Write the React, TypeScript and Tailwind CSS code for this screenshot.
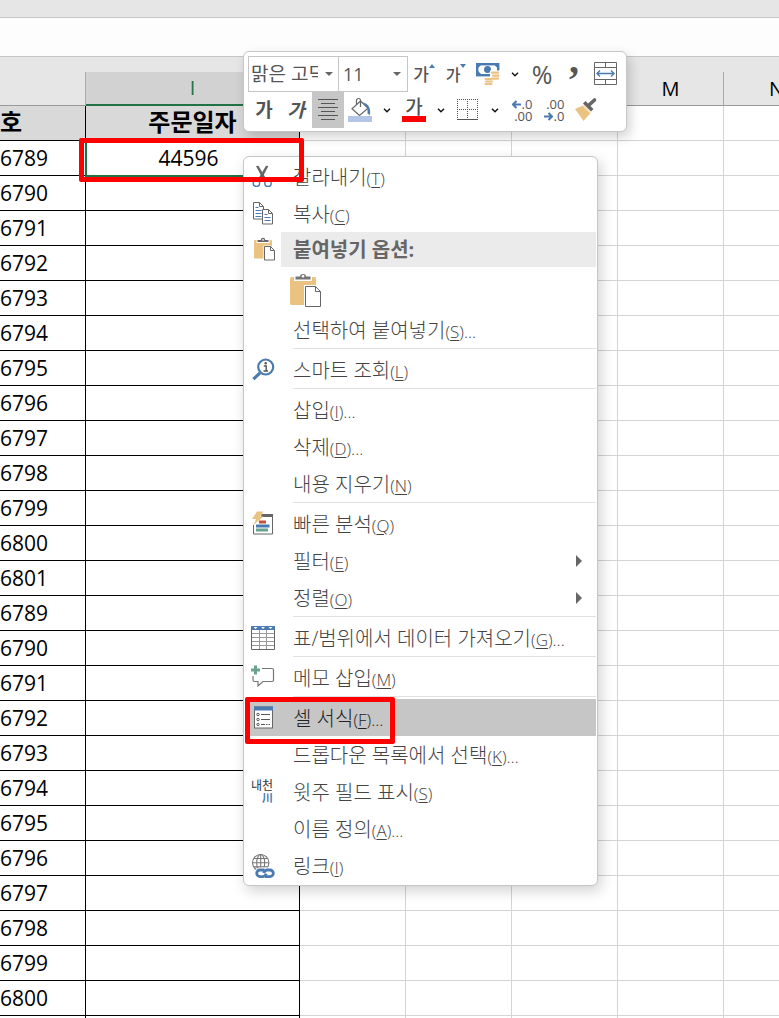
import type { ReactNode } from "react";

const orderNumbers = [
  "6789",
  "6790",
  "6791",
  "6792",
  "6793",
  "6794",
  "6795",
  "6796",
  "6797",
  "6798",
  "6799",
  "6800",
  "6801",
  "6789",
  "6790",
  "6791",
  "6792",
  "6793",
  "6794",
  "6795",
  "6796",
  "6797",
  "6798",
  "6799",
  "6800",
  "",
];

const plainColumns = ["J", "K", "L", "M", "N"];

function Svg({ children }: { children: ReactNode }) {
  return (
    <svg
      width="24"
      height="24"
      viewBox="0 0 24 24"
      fill="none"
      aria-hidden="true"
      className="shrink-0 overflow-visible"
    >
      {children}
    </svg>
  );
}

/* ---------- menu icons ---------- */

function CutIcon() {
  return (
    <Svg>
      <path d="M5 1 7.400.8 15 13.600 12.600 15.600Z" fill="#666" />
      <path d="M17.400 1 15 .8 7.400 13.600 9.800 15.600Z" fill="#666" />
      <circle cx="5.400" cy="18.200" r="3.200" stroke="#4a7ab0" strokeWidth="1.400" />
      <circle cx="17" cy="18.200" r="3.200" stroke="#4a7ab0" strokeWidth="1.400" />
    </Svg>
  );
}

function CopyIcon() {
  return (
    <Svg>
      <path d="M2.500.5h6l4 4v12.500h-10Z" fill="#fff" stroke="#666" />
      <path d="M8.500.5v4h4" stroke="#666" />
      <path d="M4.500 5.500h3M4.500 8.500h6M4.500 11.500h6M4.500 14.500h6" stroke="#4a7ab0" />
      <path d="M11.500 7.500h6l4 4v10.500h-10Z" fill="#fff" stroke="#666" />
      <path d="M17.500 7.500v4h4" stroke="#666" />
      <path d="M13.500 12.500h3M13.500 15.500h6M13.500 18.500h6" stroke="#4a7ab0" />
    </Svg>
  );
}

function PasteIcon() {
  return (
    <Svg>
      <rect x="3" y="2" width="18" height="18.500" rx="1" fill="#eac282" />
      <path d="M5.500 5V1.500h4a2.600 2.600 0 0 1 5 0h4V5Z" fill="#fff" />
      <path d="M6.500 4V2h3.300a2.200 2.200 0 0 1 4.400 0h3.300v2Z" fill="#666" />
      <circle cx="12" cy="1.800" r=".9" fill="#fff" />
      <path d="M12.500 7.500h7l5.500 5v10.500H12.500Z" fill="#fff" />
      <path d="M13.500 8.500h6l4 4v9.500h-10Z" fill="#fff" stroke="#666" />
      <path d="M19.500 8.500v4h4" stroke="#666" />
    </Svg>
  );
}

function LargePasteIcon() {
  return (
    <svg width="32" height="35" viewBox="0 0 32 35" fill="none" aria-hidden="true">
      <rect x="0" y="4" width="26" height="28" rx="1.500" fill="#eac282" />
      <path d="M4 8V3h5a4 4 0 0 1 8 0h5v5Z" fill="#fff" />
      <path d="M5.500 6.500v-3h4.300a3.300 3.300 0 0 1 6.400 0h4.300v3Z" fill="#757575" />
      <circle cx="13" cy="3.200" r="1.300" fill="#fff" />
      <path d="M14 12h12l6 6v17H14Z" fill="#fff" />
      <path d="M15.500 13.500h10l5 5v15h-15Z" fill="#fff" stroke="#666" />
      <path d="M25.500 13.500v5h5" stroke="#666" />
    </svg>
  );
}

function SmartLookupIcon() {
  return (
    <Svg>
      <circle cx="14.700" cy="9" r="7.500" stroke="#4a7ab0" strokeWidth="2.200" />
      <path d="m9 14.800-6.600 6.400" stroke="#4a7ab0" strokeWidth="3.200" />
      <circle cx="14.700" cy="5.300" r="1.200" fill="#555" />
      <path d="M12.800 8h2.400v5M12.500 13h4.600" stroke="#555" strokeWidth="1.400" />
    </Svg>
  );
}

function QuickAnalysisIcon() {
  return (
    <Svg>
      <path d="M10 3h11.500v19h-19v-9" stroke="#666" />
      <path d="M11 2h11v3H10Z" fill="#666" />
      <path d="M6 -.5h6.500L9 4.500h3.500L2.500 13 5 7H1Z" fill="#eac282" />
      <rect x="8" y="8.500" width="7" height="3" fill="#c8513c" />
      <rect x="5" y="12.500" width="13.500" height="3" fill="#4a7ab0" />
      <rect x="5" y="16.500" width="12" height="3" fill="#6aa391" />
    </Svg>
  );
}

function TableIcon() {
  return (
    <Svg>
      <path d="M.5 3v20.500h23V3" fill="#fff" stroke="#666" />
      <path
        d="M1 7.500h22M1 11.500h22M1 15.500h22M1 19.500h22M8.500 4v19M15.500 4v19"
        stroke="#999"
      />
      <rect y="0" width="24" height="4" fill="#4a7ab0" />
      <path d="M2.500 1h4l-2 2ZM10 1h4l-2 2ZM17.500 1h4l-2 2Z" fill="#fff" />
    </Svg>
  );
}

function MemoIcon() {
  return (
    <Svg>
      <path
        d="M11 2.500h10q1.500 0 1.500 1.500v10q0 1.500-1.500 1.500h-9l-5 4.500v-4.500H3.500Q2 15.500 2 14V10"
        stroke="#777"
        strokeWidth="1.200"
      />
      <path d="M4.500-.5v9M0 4h9" stroke="#6aa391" strokeWidth="3" />
    </Svg>
  );
}

function FormatCellsIcon() {
  return (
    <Svg>
      <rect x="3.500" y="1" width="18" height="21" fill="#fff" stroke="#666" />
      <rect x="3" y=".5" width="19" height="4" fill="#4a7ab0" />
      <circle cx="7" cy="8.500" r="1.200" stroke="#555" />
      <circle cx="7" cy="13.500" r="1.200" stroke="#555" />
      <circle cx="7" cy="18.500" r="1.200" stroke="#555" />
      <path d="M10 8.500h9M10 13.500h9M10 18.500h4M15 18.500h1.500M17.500 18.500h1.500" stroke="#555" />
    </Svg>
  );
}

function PhoneticIcon() {
  return (
    <span className="flex w-6 flex-col items-end pr-0.5 text-[12px] leading-3 font-normal">
      <span className="whitespace-nowrap text-[#333]">내천</span>
      <span className="text-[11px] font-bold text-[#4a7ab0]">川</span>
    </span>
  );
}

function LinkIcon() {
  return (
    <Svg>
      <g stroke="#777" strokeWidth="1.100">
        <circle cx="9.700" cy="8.700" r="8.200" />
        <ellipse cx="9.700" cy="8.700" rx="4" ry="8.200" />
        <path d="M9.700.5v16.500M1.500 8.700h16.500M2.800 4.500h13.800M2.800 12.900h13.800" />
      </g>
      <rect x="4" y="13.500" width="20" height="11" rx="5.500" fill="#fff" />
      <path
        d="M13.500 16H9a3.300 3.300 0 0 0 0 6.600h3q2.500-.3 3.300-3"
        stroke="#4a7ab0"
        strokeWidth="2.800"
      />
      <path
        d="M14 22.600h5a3.300 3.300 0 0 0 0-6.600h-3q-2.500.3-3.300 3"
        stroke="#4a7ab0"
        strokeWidth="2.800"
      />
    </Svg>
  );
}

/* ---------- toolbar icons ---------- */

function MoneyIcon() {
  return (
    <Svg>
      <rect x="1.200" y="2.200" width="21" height="11" fill="#fff" stroke="#4a7ab0" strokeWidth="2.400" />
      <circle cx="11.500" cy="7.500" r="3.500" fill="#4a7ab0" />
      <path d="M2 3h3L2 6ZM21.500 3h-3l3 3ZM2 12h3L2 9Z" fill="#4a7ab0" />
      <path d="M14 8.500h10v10h-6v6H7v-8h7Z" fill="#fff" />
      <g fill="#eac282">
        <rect x="15" y="9.500" width="8" height="2.200" rx="1" />
        <rect x="16" y="12.500" width="7.500" height="2.200" rx="1" />
        <rect x="15" y="15.500" width="8" height="2.200" rx="1" />
        <rect x="8.500" y="16" width="8" height="2" rx="1" />
        <rect x="9" y="18.500" width="8" height="2" rx="1" />
        <rect x="8.500" y="21" width="8" height="2" rx="1" />
      </g>
    </Svg>
  );
}

function MergeIcon() {
  return (
    <Svg>
      <path
        d="M.5.5h22v22H.5ZM.5 5.500h22M.5 17.500h22M11.500.5v5M11.500 17.500v5"
        stroke="#666"
      />
      <path d="M3 11.500h17M6 8.500l-3 3 3 3M17 8.500l3 3-3 3" stroke="#4a7ab0" strokeWidth="1.400" />
    </Svg>
  );
}

function AlignIcon() {
  return (
    <Svg>
      <path
        d="M2 1.500h20M5 5.500h14M2 9.500h20M5 13.500h14M2 17.500h20M5 21.500h14"
        stroke="#555"
      />
    </Svg>
  );
}

function FillIcon() {
  return (
    <Svg>
      <path d="M12.500 3 20 10.300 11.500 17.500 4 10.800Z" fill="#fff" stroke="#666" strokeWidth="1.200" />
      <path d="M8.500 7V2.500a2 2 0 0 1 4 0V9" stroke="#666" strokeWidth="1.200" />
      <path d="M15 4.500c5 1 8 5 7 12.500l-2.500-1.500Q20.500 9 15 4.500Z" fill="#4a7ab0" />
      <rect y="18" width="24" height="6" fill="#b4c6e7" />
    </Svg>
  );
}

function BordersIcon() {
  return (
    <Svg>
      <path
        d="M1 1.500h21M1.500 1v20M21.500 1v20M11.500 1v20M1 11.500h21"
        stroke="#555"
        strokeDasharray="1 1"
      />
      <path d="M1 21.500h21" stroke="#555" />
    </Svg>
  );
}

function BrushIcon() {
  return (
    <Svg>
      <path d="m1 11 9-4 7 7.500-7.500 8.500Z" fill="#eac282" />
      <path d="m9 5.500 2.500-2.500 8 8-2.500 2.500Z" fill="#666" />
      <path d="m14.500 7.500 6-5.500" stroke="#666" strokeWidth="3.600" strokeLinecap="round" />
      <path d="m8.500 7 8 8" stroke="#fff" strokeWidth="1" />
    </Svg>
  );
}

function ArrowIcon({ right }: { right?: boolean }) {
  return (
    <svg width="9" height="9" viewBox="0 0 9 9" fill="none" aria-hidden="true">
      <path
        d={right ? "M0 4.500h8M4.500 1 8 4.500 4.500 8" : "M9 4.500H1M4.500 1 1 4.500 4.500 8"}
        stroke="#4a7ab0"
        strokeWidth="2"
      />
    </svg>
  );
}

function Caret() {
  return (
    <svg width="8" height="4" viewBox="0 0 8 4" aria-hidden="true">
      <path d="M0 0h8L4 4Z" fill="#666" />
    </svg>
  );
}

function ToolButton({
  label,
  active,
  children,
}: {
  label: string;
  active?: boolean;
  children: ReactNode;
}) {
  return (
    <button
      aria-label={label}
      className={`flex h-9 w-8 shrink-0 items-center justify-center ${active ? "bg-[#c6c6c6]" : ""}`}
    >
      {children}
    </button>
  );
}

function MoreButton({ label }: { label: string }) {
  return (
    <button aria-label={label} className="flex h-9 w-[22px] shrink-0 items-center justify-center">
      <svg width="8" height="5" viewBox="0 0 8 5" fill="none" aria-hidden="true">
        <path d="m1 .8 3 3 3-3" stroke="#111" strokeWidth="1.400" />
      </svg>
    </button>
  );
}

function MiniToolbar() {
  return (
    <div
      role="toolbar"
      className="absolute top-[51px] left-[243px] rounded-md border border-[#c6c6c6] bg-white pt-1 pr-1 pb-[3px] pl-1 text-[#555] shadow-[3px_5px_12px_rgba(0,0,0,0.18)]"
    >
      <div className="flex">
        <div className="flex h-9 w-[91px] items-center border border-[#c6c6c6] pl-0.5">
          <input
            aria-label="글꼴"
            defaultValue="맑은 고딕"
            className="w-[67px] min-w-0 text-[19px] outline-none"
          />
          <button aria-label="글꼴 목록" className="flex flex-1 justify-center pl-0.5">
            <Caret />
          </button>
        </div>
        <div className="-ml-px flex h-9 w-[70px] items-center border border-[#c6c6c6] pl-1">
          <input
            aria-label="글꼴 크기"
            defaultValue="11"
            className="w-11 min-w-0 text-[18px] outline-none"
          />
          <button aria-label="크기 목록" className="flex flex-1 justify-center">
            <Caret />
          </button>
        </div>
        <ToolButton label="글꼴 크기 크게">
          <span className="pt-0.5 text-[17px] font-medium">가</span>
          <svg width="6" height="4" viewBox="0 0 6 4" aria-hidden="true" className="mb-4">
            <path d="M0 4h6L3 0Z" fill="#4a7ab0" />
          </svg>
        </ToolButton>
        <ToolButton label="글꼴 크기 작게">
          <span className="pt-0.5 text-[16px] font-medium">가</span>
          <svg width="6" height="4" viewBox="0 0 6 4" aria-hidden="true" className="mb-4">
            <path d="M0 0h6L3 4Z" fill="#4a7ab0" />
          </svg>
        </ToolButton>
        <ToolButton label="회계 표시 형식">
          <MoneyIcon />
        </ToolButton>
        <MoreButton label="회계 표시 형식 더 보기" />
        <ToolButton label="백분율 스타일">
          <span className="text-[25px] leading-none">%</span>
        </ToolButton>
        <ToolButton label="쉼표 스타일">
          <span className="pb-7 font-['Liberation_Serif',serif] text-[40px] leading-2 font-bold">
            ,
          </span>
        </ToolButton>
        <ToolButton label="병합하고 가운데 맞춤">
          <MergeIcon />
        </ToolButton>
      </div>
      <div className="flex">
        <ToolButton label="굵게">
          <span className="text-[19px] font-bold">가</span>
        </ToolButton>
        <ToolButton label="기울임꼴">
          <span className="text-[19px] font-bold italic">가</span>
        </ToolButton>
        <ToolButton label="가운데 맞춤" active>
          <AlignIcon />
        </ToolButton>
        <ToolButton label="채우기 색">
          <FillIcon />
        </ToolButton>
        <MoreButton label="채우기 색 더 보기" />
        <ToolButton label="글꼴 색">
          <span className="flex h-6 w-6 justify-center border-b-[6px] border-[#f00] text-[19px] leading-[18px] font-medium">
            가
          </span>
        </ToolButton>
        <MoreButton label="글꼴 색 더 보기" />
        <ToolButton label="테두리">
          <BordersIcon />
        </ToolButton>
        <MoreButton label="테두리 더 보기" />
        <ToolButton label="자릿수 늘림">
          <span className="flex flex-col items-end text-[13px] leading-3">
            <span className="flex items-center gap-px">
              <ArrowIcon />
              .0
            </span>
            <span>.00</span>
          </span>
        </ToolButton>
        <ToolButton label="자릿수 줄임">
          <span className="flex flex-col items-end text-[13px] leading-3">
            <span>.00</span>
            <span className="flex items-center gap-px">
              <ArrowIcon right />
              .0
            </span>
          </span>
        </ToolButton>
        <ToolButton label="서식 복사">
          <BrushIcon />
        </ToolButton>
      </div>
    </div>
  );
}

type MenuItemProps = {
  label: string;
  hotkey: string;
  dots?: boolean;
  icon?: ReactNode;
  submenu?: boolean;
  active?: boolean;
};

function MenuItem({ label, hotkey, dots, icon, submenu, active }: MenuItemProps) {
  return (
    <button
      role="menuitem"
      className={`flex h-[37px] w-full items-center pr-3.5 pl-1.5 text-left ${active ? "bg-[#c6c6c6] text-[#222]" : ""}`}
    >
      <span className="flex w-[42px] shrink-0">{icon}</span>
      <span className="flex-1 pt-1 whitespace-nowrap">
        {label}
        <span className="text-[17px]">
          (<u className="underline-offset-2">{hotkey}</u>){dots && "..."}
        </span>
      </span>
      {submenu && (
        <svg width="6" height="12" viewBox="0 0 6 12" aria-hidden="true">
          <path d="M0 0v12l6-6Z" fill="#666" />
        </svg>
      )}
    </button>
  );
}

function Separator() {
  return <hr className="mb-0.5 ml-12 border-[#e1e1e1]" />;
}

function ContextMenu() {
  return (
    <div
      role="menu"
      className="absolute top-[156px] left-[243px] w-[355px] rounded-md border border-[#c6c6c6] bg-white p-px text-[20px] leading-7 font-light text-[#444] shadow-[3px_5px_14px_rgba(0,0,0,0.18)]"
    >
      <MenuItem label="잘라내기" hotkey="T" icon={<CutIcon />} />
      <MenuItem label="복사" hotkey="C" icon={<CopyIcon />} />
      <div className="flex h-[35px] items-center pl-1.5">
        <span className="w-[30px] shrink-0">
          <PasteIcon />
        </span>
        <span className="flex h-full flex-1 items-center bg-[#ebebeb] pl-3 text-[20px] font-bold text-[#666]">
          붙여넣기 옵션:
        </span>
      </div>
      <div className="flex h-11 items-start pt-1.5 pl-[45px]">
        <button aria-label="붙여넣기">
          <LargePasteIcon />
        </button>
      </div>
      <MenuItem label="선택하여 붙여넣기" hotkey="S" dots />
      <Separator />
      <MenuItem label="스마트 조회" hotkey="L" icon={<SmartLookupIcon />} />
      <Separator />
      <MenuItem label="삽입" hotkey="I" dots />
      <MenuItem label="삭제" hotkey="D" dots />
      <MenuItem label="내용 지우기" hotkey="N" />
      <Separator />
      <MenuItem label="빠른 분석" hotkey="Q" icon={<QuickAnalysisIcon />} />
      <MenuItem label="필터" hotkey="E" submenu />
      <MenuItem label="정렬" hotkey="O" submenu />
      <Separator />
      <MenuItem label="표/범위에서 데이터 가져오기" hotkey="G" dots icon={<TableIcon />} />
      <Separator />
      <MenuItem label="메모 삽입" hotkey="M" icon={<MemoIcon />} />
      <Separator />
      <MenuItem label="셀 서식" hotkey="F" dots active icon={<FormatCellsIcon />} />
      <MenuItem label="드롭다운 목록에서 선택" hotkey="K" dots />
      <MenuItem label="윗주 필드 표시" hotkey="S" icon={<PhoneticIcon />} />
      <MenuItem label="이름 정의" hotkey="A" dots />
      <MenuItem label="링크" hotkey="I" icon={<LinkIcon />} />
    </div>
  );
}

function Sheet() {
  return (
    <table className="w-[830px] table-fixed border-separate border-spacing-0 text-[21px] leading-none text-black">
      <colgroup>
        <col className="w-[86px]" />
        <col className="w-[214px]" />
        {plainColumns.map((column) => (
          <col key={column} />
        ))}
      </colgroup>
      <thead>
        <tr className="h-[34px] bg-[#e6e6e6] text-[20px]">
          <th className="border-r border-b border-r-[#ababab] border-b-[#999] p-0" />
          <th className="border-r border-b-2 border-r-[#ababab] border-b-[#217346] bg-[#d2d2d2] p-0 font-normal text-[#217346]">
            I
          </th>
          {plainColumns.map((column) => (
            <th
              key={column}
              className="border-r border-b border-r-[#ababab] border-b-[#999] p-0 font-normal"
            >
              {column}
            </th>
          ))}
        </tr>
      </thead>
      <tbody>
        <tr className="h-[35px] text-[24px] font-bold">
          <td className="border-r border-b border-black bg-[#d9d9d9] p-0 pb-0.5">호</td>
          <td className="border-r border-b border-black bg-[#d9d9d9] p-0 pb-0.5 text-center">
            주문일자
          </td>
          {plainColumns.map((column) => (
            <td key={column} className="border-r border-b border-[#d4d4d4] p-0" />
          ))}
        </tr>
        {orderNumbers.map((order, i) => (
          <tr key={i} className="h-[35px]">
            <td className="border-r border-b border-black p-0">{order}</td>
            <td
              className={`border-r border-b border-black p-0 pr-2 text-center ${i === 0 ? "outline-2 -outline-offset-1 outline-[#217346]" : ""}`}
            >
              {i === 0 && "44596"}
            </td>
            {plainColumns.map((column) => (
              <td key={column} className="border-r border-b border-[#d4d4d4] p-0" />
            ))}
          </tr>
        ))}
      </tbody>
    </table>
  );
}

function App() {
  return (
    <div className="relative h-screen overflow-hidden bg-white font-['Open_Sans','Noto_Sans_CJK_KR',sans-serif]">
      <div className="h-[18px] border-b border-[#c6c6c6] bg-[#e6e6e6]" />
      <div className="h-[39px] border-b border-[#c6c6c6] bg-[#fdfdfd]" />
      <div className="h-[15px] bg-[#e6e6e6]" />
      <Sheet />
      <MiniToolbar />
      <ContextMenu />
      <div className="pointer-events-none absolute top-[138px] left-[79px] h-11 w-[225px] rounded-xs border-5 border-[#f00]" />
      <div className="pointer-events-none absolute top-[697px] left-[245px] h-[47px] w-[150px] rounded-xs border-5 border-[#f00]" />
    </div>
  );
}

export default App;
